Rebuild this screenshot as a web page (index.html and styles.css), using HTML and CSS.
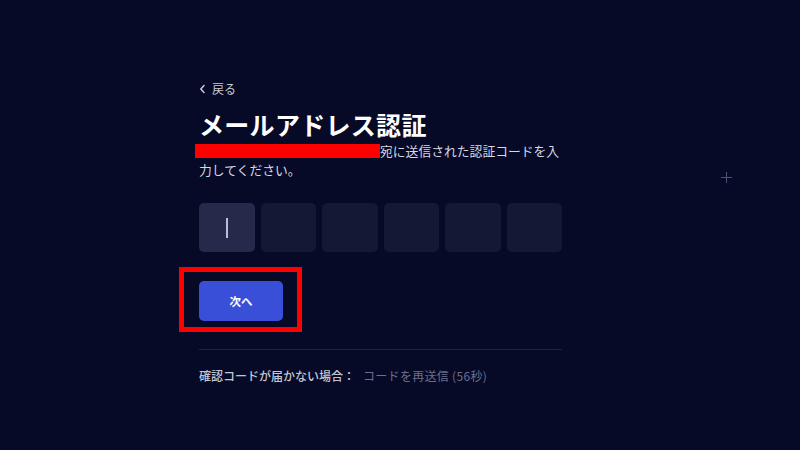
FILE: index.html
```html
<!DOCTYPE html>
<html lang="ja">
<head>
<meta charset="utf-8">
<link rel="stylesheet" href="styles.css">
</head>
<body>
<div class="page">
  <span class="star"></span>
  <main class="panel">
    <a class="back"><svg class="chev" width="7" height="10" viewBox="0 0 7 10"><path d="M5 1.5 1.8 5 5 8.5" fill="none" stroke="#c9cbd6" stroke-width="1.5" stroke-linecap="round" stroke-linejoin="round"/></svg>戻る</a>
    <h1 class="title">メールアドレス認証</h1>
    <p class="desc"><span class="redact"></span>宛に送信された認証コードを入力してください。</p>
    <div class="codes">
      <div class="box active"><span class="caret"></span></div>
      <div class="box"></div>
      <div class="box"></div>
      <div class="box"></div>
      <div class="box"></div>
      <div class="box"></div>
    </div>
    <div class="btn-wrap">
      <button class="btn">次へ</button>
    </div>
    <hr class="divider">
    <p class="resend"><span class="label">確認コードが届かない場合：</span><span class="muted">コードを再送信 (56秒)</span></p>
  </main>
</div>
</body>
</html>
```
FILE: styles.css
```css
*, *::before, *::after { box-sizing: border-box; }
html, body { margin: 0; padding: 0; }
body {
  width: 800px;
  height: 450px;
  overflow: hidden;
  background: #060a27;
  font-family: "Noto Sans CJK JP", "Noto Sans", sans-serif;
  color: #fff;
}
.page {
  position: relative;
  width: 800px;
  height: 450px;
  padding: 80px 0 0 199px;
}
.star {
  position: absolute;
  left: 721px;
  top: 172px;
  width: 11px;
  height: 11px;
  background:
    linear-gradient(#6d7196, #6d7196) center / 11px 1px no-repeat,
    linear-gradient(#6d7196, #6d7196) center / 1px 11px no-repeat;
  opacity: 0.7;
}
.panel {
  width: 363px;
  display: flex;
  flex-direction: column;
}
.back {
  font-size: 12px;
  line-height: 18px;
  color: #c9cbd6;
  display: flex;
  align-items: center;
  gap: 6px;
}
.chev { display: block; }
.title {
  margin: 9px 0 0;
  font-size: 25px;
  line-height: 34px;
  font-weight: 700;
  letter-spacing: 0.3px;
}
.desc {
  margin: 0;
  font-size: 12.8px;
  line-height: 19px;
  color: #d6d8e2;
}
.redact {
  display: inline-block;
  vertical-align: -2px;
  width: 185px;
  height: 14px;
  margin-left: -4px;
  background: #ff0000;
}
.codes {
  margin-top: 24px;
  display: grid;
  grid-template-columns: repeat(6, 1fr);
  gap: 6px;
}
.box {
  height: 49px;
  border-radius: 5px;
  background: #141834;
  display: flex;
  align-items: center;
  justify-content: center;
}
.box.active { background: #262a4a; }
.caret {
  width: 2px;
  height: 20px;
  background: #b8bde0;
}
.btn-wrap {
  position: relative;
  margin-top: 29px;
  align-self: flex-start;
}
.btn-wrap::after {
  content: "";
  position: absolute;
  left: -20px;
  top: -14px;
  width: 123px;
  height: 65px;
  border: 5px solid #ff0000;
}
.btn {
  width: 84px;
  height: 40px;
  border: 0;
  border-radius: 5px;
  background: #3a4fd8;
  color: #fff;
  font-family: inherit;
  font-size: 11.5px;
  font-weight: 700;
  display: block;
}
.divider {
  margin: 28px 0 0;
  border: 0;
  height: 1px;
  background: #1f2342;
}
.resend {
  margin: 17px 0 0;
  font-size: 12px;
  line-height: 18px;
}
.label { color: #c4c7d3; font-weight: 500; margin-right: 8px; }
.muted { color: #6a6f8d; letter-spacing: 0.3px; }
```
